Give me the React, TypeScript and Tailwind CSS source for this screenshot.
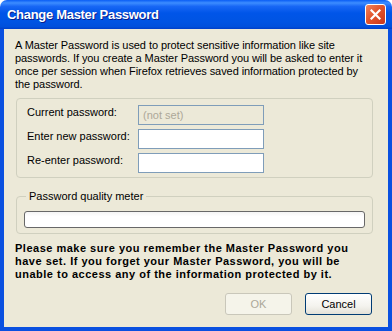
import type React from "react"

const Row: React.FC<{ label: string; disabled?: boolean; value?: string }> = ({ label, disabled, value }) => {
  return (
    <div className="flex items-start">
      <span className="w-[111px] leading-[13px] pt-[1px]">{label}</span>
      <div
        className={
          disabled
            ? "w-[126px] h-[20px] border border-[#7F9DB9] bg-[#ECE9D8] text-[#ACA899] px-[4px] leading-[18px]"
            : "w-[126px] h-[20px] border border-[#7F9DB9] bg-white"
        }
      >
        {value}
      </div>
    </div>
  )
}

const App: React.FC = () => {
  return (
    <div className="w-[392px] h-[331px] flex flex-col font-['Liberation_Sans',Arial,sans-serif] text-[11px] text-black">
      {/* title bar */}
      <div className="h-[29px] shrink-0 rounded-t-[7px] flex items-center pl-[7px] pr-[6px] bg-[linear-gradient(180deg,#0A5DF5_0%,#3D8DFF_10%,#1867F5_22%,#0055E8_45%,#0054E3_75%,#0050DC_92%,#003FC8_100%)]">
        <span className="text-white font-bold text-[13px] tracking-[-0.3px] leading-[16px] mt-[1px] [text-shadow:1px_1px_0_#0A1F8C]">
          Change Master Password
        </span>
        <div className="ml-auto w-[21px] h-[21px] rounded-[3px] border border-white bg-[linear-gradient(135deg,#F0845F_0%,#E2552D_45%,#C8361B_100%)] flex items-center justify-center">
          <svg width="11" height="11" viewBox="0 0 11 11">
            <path d="M1.5 1.5 L9.5 9.5 M9.5 1.5 L1.5 9.5" stroke="white" strokeWidth="2.2" strokeLinecap="square" />
          </svg>
        </div>
      </div>

      {/* body */}
      <div className="flex-1 flex flex-col bg-[#ECE9D8] border-x-[4px] border-b-[4px] border-[#0A50E0] pt-[10px] pb-[12px]">
        <p className="px-[11px] leading-[13px] tracking-[-0.07px] whitespace-nowrap">
          A Master Password is used to protect sensitive information like site
          <br />
          passwords. If you create a Master Password you will be asked to enter it
          <br />
          once per session when Firefox retrieves saved information protected by
          <br />
          the password.
        </p>

        <div className="mt-[7px] ml-[12px] mr-[15px] border border-[#D0D0BF] rounded-[4px] pt-[6px] pb-[4px] pl-[10px] flex flex-col gap-[4px]">
          <Row label="Current password:" disabled value="(not set)" />
          <Row label="Enter new password:" />
          <Row label="Re-enter password:" />
        </div>

        <fieldset className="mt-[12px] ml-[12px] mr-[15px] border border-[#D0D0BF] rounded-[4px] px-[7px] pt-[8px] pb-[5px]">
          <legend className="ml-[2px] px-[3px] leading-[13px]">Password quality meter</legend>
          <div className="h-[17px] rounded-[3px] border border-[#686868] bg-[linear-gradient(180deg,#F4F4F4_0%,#FFFFFF_30%,#FFFFFF_100%)]" />
        </fieldset>

        <p className="mt-[8px] px-[11px] leading-[13px] font-bold tracking-[0.5px] whitespace-nowrap">
          Please make sure you remember the Master Password you
          <br />
          have set. If you forget your Master Password, you will be
          <br />
          unable to access any of the information protected by it.
        </p>

        <div className="mt-auto flex justify-end gap-[13px] pr-[16px]">
          <button className="w-[67px] h-[22px] rounded-[3px] border border-[#C9C7BA] bg-[#F5F4EA] text-[#ACA899]">
            OK
          </button>
          <button className="w-[67px] h-[22px] rounded-[3px] border border-[#003C74] bg-[linear-gradient(180deg,#FFFFFF_0%,#F4F3EE_60%,#E3E1D8_100%)]">
            Cancel
          </button>
        </div>
      </div>
    </div>
  )
}

export default App
